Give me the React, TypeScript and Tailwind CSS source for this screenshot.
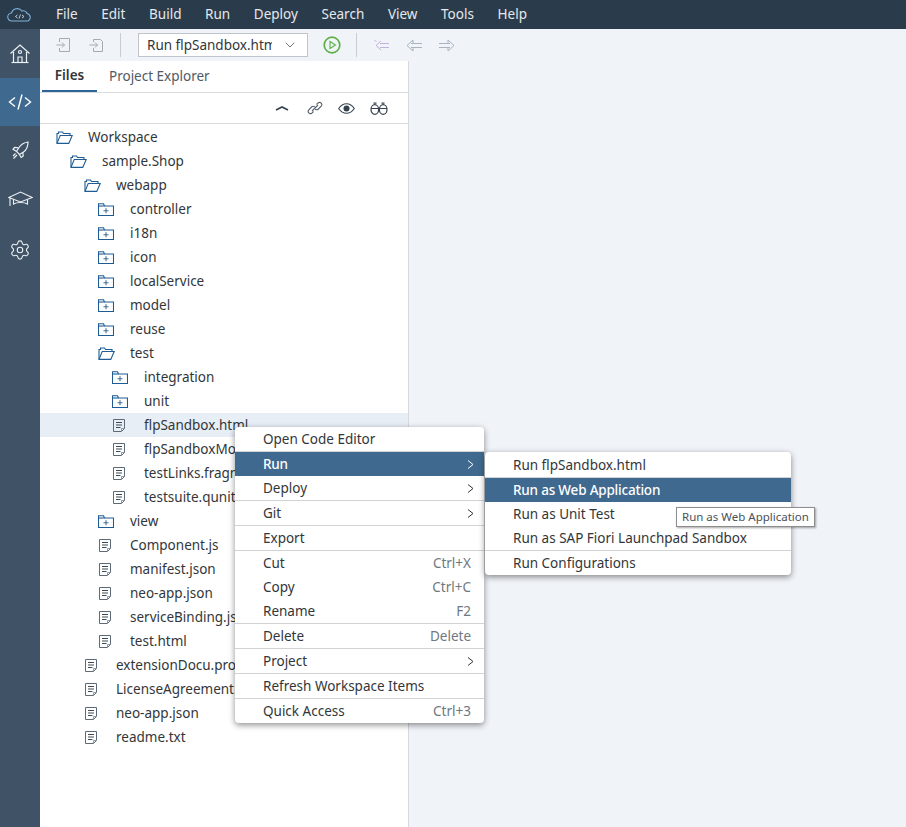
import { ChevronDown, Settings } from 'lucide-react';

const menus = ['File', 'Edit', 'Build', 'Run', 'Deploy', 'Search', 'View', 'Tools', 'Help'];

type Row = { name: string; level: number; kind: 'open' | 'closed' | 'file'; selected?: boolean };

const tree: Row[] = [
  { name: 'Workspace', level: 0, kind: 'open' },
  { name: 'sample.Shop', level: 1, kind: 'open' },
  { name: 'webapp', level: 2, kind: 'open' },
  { name: 'controller', level: 3, kind: 'closed' },
  { name: 'i18n', level: 3, kind: 'closed' },
  { name: 'icon', level: 3, kind: 'closed' },
  { name: 'localService', level: 3, kind: 'closed' },
  { name: 'model', level: 3, kind: 'closed' },
  { name: 'reuse', level: 3, kind: 'closed' },
  { name: 'test', level: 3, kind: 'open' },
  { name: 'integration', level: 4, kind: 'closed' },
  { name: 'unit', level: 4, kind: 'closed' },
  { name: 'flpSandbox.html', level: 4, kind: 'file', selected: true },
  { name: 'flpSandboxMockServer.html', level: 4, kind: 'file' },
  { name: 'testLinks.fragment.xml', level: 4, kind: 'file' },
  { name: 'testsuite.qunit.html', level: 4, kind: 'file' },
  { name: 'view', level: 3, kind: 'closed' },
  { name: 'Component.js', level: 3, kind: 'file' },
  { name: 'manifest.json', level: 3, kind: 'file' },
  { name: 'neo-app.json', level: 3, kind: 'file' },
  { name: 'serviceBinding.js', level: 3, kind: 'file' },
  { name: 'test.html', level: 3, kind: 'file' },
  { name: 'extensionDocu.properties', level: 2, kind: 'file' },
  { name: 'LicenseAgreement.pdf', level: 2, kind: 'file' },
  { name: 'neo-app.json', level: 2, kind: 'file' },
  { name: 'readme.txt', level: 2, kind: 'file' },
];

const levelPad = ['pl-[16px]', 'pl-[30px]', 'pl-[44px]', 'pl-[58px]', 'pl-[72px]'];

type Item = { label: string; hint?: string; arrow?: boolean; sep?: boolean; active?: boolean };

const contextItems: Item[] = [
  { label: 'Open Code Editor', sep: true },
  { label: 'Run', arrow: true, active: true },
  { label: 'Deploy', arrow: true, sep: true },
  { label: 'Git', arrow: true, sep: true },
  { label: 'Export', sep: true },
  { label: 'Cut', hint: 'Ctrl+X' },
  { label: 'Copy', hint: 'Ctrl+C' },
  { label: 'Rename', hint: 'F2', sep: true },
  { label: 'Delete', hint: 'Delete', sep: true },
  { label: 'Project', arrow: true, sep: true },
  { label: 'Refresh Workspace Items', sep: true },
  { label: 'Quick Access', hint: 'Ctrl+3' },
];

const runItems: Item[] = [
  { label: 'Run flpSandbox.html', sep: true },
  { label: 'Run as Web Application', active: true },
  { label: 'Run as Unit Test' },
  { label: 'Run as SAP Fiori Launchpad Sandbox', sep: true },
  { label: 'Run Configurations' },
];

function FolderOpen() {
  return (
    <svg width="17" height="13" viewBox="0 0 17 13" fill="none" stroke="#1f5c94" strokeWidth="1.100">
      <path d="M1 12V2.500h1.500V1h4l1 1.500H14v2" />
      <path d="M1 12.400h11.800l3.400-7.900H4.200L1 12.400z" />
    </svg>
  );
}

function FolderClosed() {
  return (
    <svg width="16" height="13" viewBox="0 0 16 13" fill="none" stroke="#1f5c94" strokeWidth="1.100">
      <path d="M.5 12.500V.8h5l1 2.200h9v9.500z" />
      <path d="M.5 3h6" />
      <path d="M5.500 7.800h5M8 5.300v5" stroke="#3f6f9f" />
    </svg>
  );
}

function FileIcon() {
  return (
    <svg width="12" height="13" viewBox="0 0 12 13" fill="none" stroke="#3c4a57" strokeWidth="1">
      <path d="M.5.5h11v9l-3 3h-8z" stroke="#5c6a78" />
      <path d="M8.500 12.500v-3h3" stroke="#8b97a3" />
      <path d="M3 3.500h6M3 6h6M3 8.500h4.500" />
    </svg>
  );
}

function MenuRow({ item, className }: { item: Item; className: string }) {
  return (
    <div
      className={`flex h-[24px] items-center pr-[13px] ${className} ${
        item.active ? 'bg-[#3f698f] font-medium tracking-[-0.2px] text-white' : 'text-[#32363a]'
      } ${item.sep ? 'box-content border-b border-[#d0d2d4]' : ''}`}
    >
      <span className="flex-1 whitespace-nowrap">{item.label}</span>
      {item.hint && <span className="text-[#6f7880]">{item.hint}</span>}
      {item.arrow && (
        <svg className="-mr-[3px]" width="7" height="9" viewBox="0 0 7 9" fill="none" stroke={item.active ? '#fff' : '#32363a'}>
          <path d="M1 .5l5 4-5 4" />
        </svg>
      )}
    </div>
  );
}

export default function App() {
  return (
    <div className="relative flex h-[827px] w-[906px] flex-col overflow-hidden bg-white font-['Noto_Sans',sans-serif] text-[13.500px] text-[#32363a]">
      <header className="flex h-[29px] shrink-0 items-center bg-[#2a3b4b]">
        <div className="flex w-[56px] justify-start pl-[7px]">
          <svg width="26" height="14" viewBox="0 0 26 14" fill="none" stroke="#7fb3da" strokeWidth="1.100">
            <path d="M7 13H5a4 4 0 0 1-.5-8A6 6 0 0 1 15 3a4 4 0 0 1 5 2.500A4 4 0 0 1 21 13z" />
            <path d="M10.500 7l-2 1.500 2 1.500M15 7l2 1.500-2 1.500M13.500 6.500l-1.500 4" stroke="#c6def0" strokeWidth=".9" />
          </svg>
        </div>
        <nav className="flex gap-[23.650px] text-[#e6e9ec]">
          {menus.map((m) => (
            <span key={m}>{m}</span>
          ))}
        </nav>
      </header>

      <div className="flex min-h-0 flex-1">
        <aside className="flex w-[40px] shrink-0 flex-col bg-[#3f5266] text-[#eef1f4]">
          <div className="flex h-[49px] items-center justify-center">
            <svg width="20" height="20" viewBox="0 0 20 20" fill="none" stroke="currentColor" strokeWidth="1.200">
              <path d="M.5 9.500L10 1l9.500 8.500" />
              <path d="M3.500 8v10.500h13V8" />
              <path d="M1.500 18.500h17" />
              <path d="M8 18.500V13h4v5.500" />
              <circle cx="10" cy="8" r="1.500" />
            </svg>
          </div>
          <div className="flex h-[48px] items-center justify-center bg-[#3f698f] text-white">
            <svg width="24" height="16" viewBox="0 0 24 16" fill="none" stroke="currentColor" strokeWidth="1.400">
              <path d="M7 3.500L1.500 8 7 12.500M17 3.500L22.500 8 17 12.500M14 .5L10 15.500" />
            </svg>
          </div>
          <div className="flex h-[47px] items-center justify-center">
            <svg width="17" height="18" viewBox="0 0 17 18" fill="none" stroke="currentColor" strokeWidth="1.200">
              <path d="M16 1c-4 .5-7 2.500-9 5.500l-2.500 4 3 3 4-2.500c3-2 4.500-5.500 4.500-10z" />
              <path d="M6.500 6.800l-4-.5-1.500 2 3.300 2M10.800 11l.4 4-2 1.500-2-3.200" />
              <path d="M3.500 12.500L1 15M5 14l-3.500 3.500" />
            </svg>
          </div>
          <div className="flex h-[51px] items-center justify-center">
            <svg width="25" height="16" viewBox="0 0 25 16" fill="none" stroke="currentColor" strokeWidth="1.100">
              <path d="M.8 6.500L12.500 1l11.700 5.500-11.700 4.500z" />
              <path d="M5.500 8.500V13c3-2 11-2 14 0V8.500" />
              <path d="M2 7v8" />
            </svg>
          </div>
          <div className="flex h-[52px] items-center justify-center">
            <Settings size={22} strokeWidth={1.200} />
          </div>
        </aside>

        <div className="flex min-w-0 flex-1 flex-col bg-[#f0f3f8]">
          <div className="flex h-[32px] shrink-0 items-center pl-[16px]">
            <svg width="16" height="16" viewBox="0 0 16 16" fill="none" stroke="#a4abb2">
              <path d="M3.500 5V1.500h10v13h-10V11M.5 8h8M6 5.500L8.500 8 6 10.500" />
            </svg>
            <svg className="ml-[16px]" width="16" height="16" viewBox="0 0 16 16" fill="none" stroke="#a4abb2">
              <path d="M5.500 5V2.500h7l2 2v10h-9V11M1.500 8h8M7 5.500L9.500 8 7 10.500" />
            </svg>
            <div className="ml-[16px] h-[24px] w-px bg-[#c6ccd2]" />
            <div className="ml-[17px] flex h-[24px] w-[170px] items-center border border-[#bfc5cb] bg-white pl-[8px]">
              <span className="w-[125px] overflow-hidden whitespace-nowrap">Run flpSandbox.html</span>
              <ChevronDown className="ml-[10px] text-[#4a5561]" size={16} strokeWidth={1.200} />
            </div>
            <svg className="ml-[15px]" width="18" height="18" viewBox="0 0 18 18" fill="none" stroke="#5bb146" strokeWidth="1.700">
              <circle cx="9" cy="9" r="7.800" />
              <path d="M7 5.500L12.500 9 7 12.500z" strokeWidth="1.100" />
            </svg>
            <div className="ml-[15px] h-[24px] w-px bg-[#c6ccd2]" />
            <svg className="ml-[16px]" width="17" height="13" viewBox="0 0 17 13" fill="none" stroke="#c3b2dc">
              <path d="M1.500 1.500l2 1M8 2L3 6.500 8 11M3 6.500h0M7 4.500h9M7 8.500h9" />
            </svg>
            <svg className="ml-[16px]" width="17" height="13" viewBox="0 0 17 13" fill="none" stroke="#a9b4bf">
              <path d="M7 1L1 6.500 7 12M7 1v3M7 12V9M5 4.500h11M5 8.500h11" />
            </svg>
            <svg className="ml-[15px]" width="17" height="13" viewBox="0 0 17 13" fill="none" stroke="#a9b4bf">
              <path d="M10 1l6 5.500-6 5.500M10 1v3M10 12V9M1 4.500h11M1 8.500h11" />
            </svg>
          </div>

          <section className="flex w-[369px] min-h-0 flex-1 flex-col border-r border-[#d5d8dc] bg-white">
            <div className="flex h-[32px] shrink-0 items-end border-b border-[#d9dcdf] pl-[2px]">
              <span className="flex h-[32px] w-[55px] items-center justify-center border-b-2 border-[#2f6497] font-semibold">
                Files
              </span>
              <span className="flex h-[32px] items-center pl-[12px] text-[#4f5a64]">Project Explorer</span>
            </div>
            <div className="flex h-[31px] shrink-0 items-center justify-end gap-[15px] border-b border-[#d9dcdf] pr-[20px] text-[#34424f]">
              <svg className="mr-[3px]" width="14" height="6" viewBox="0 0 14 6" fill="none" stroke="currentColor" strokeWidth="1.600">
                <path d="M1 5L7 2l6 3" />
              </svg>
              <svg width="16" height="16" viewBox="0 0 16 16" fill="none" stroke="#55616d" strokeWidth="1.100">
                <path d="M6.500 11.500l-1.700 1.700a2.300 2.300 0 0 1-3.200-3.200l3-3a2.300 2.300 0 0 1 3.200 0" />
                <path d="M9.500 4.500l1.700-1.700a2.300 2.300 0 0 1 3.200 3.200l-3 3a2.300 2.300 0 0 1-3.200 0" />
                <path d="M5 11l6-6" />
              </svg>
              <svg width="17" height="11" viewBox="0 0 17 11" fill="none" stroke="currentColor" strokeWidth="1.100">
                <path d="M.7 5.500C3 2 5.500.7 8.500.7s5.500 1.300 7.800 4.800c-2.300 3.500-4.800 4.800-7.800 4.800S3 9 .7 5.500z" />
                <circle cx="8.500" cy="5.500" r="3" fill="currentColor" stroke="none" />
              </svg>
              <svg width="18" height="13" viewBox="0 0 18 13" fill="none" stroke="currentColor" strokeWidth="1.200">
                <ellipse cx="4.800" cy="7.500" rx="3.800" ry="4.800" />
                <ellipse cx="13.200" cy="7.500" rx="3.800" ry="4.800" />
                <path d="M1 6.500h16M3.500 1.200h3M11.500 1.200h3M8.600 6.500h.8" />
              </svg>
            </div>
            <ul className="flex-1 overflow-hidden pt-px">
              {tree.map((row, i) => (
                <li
                  key={i}
                  className={`flex h-[24px] items-center ${levelPad[row.level]} ${row.selected ? 'bg-[#e7eef6]' : ''}`}
                >
                  <span className={`flex w-[32px] shrink-0 ${row.kind === 'file' ? 'pl-[1px]' : ''}`}>
                    {row.kind === 'open' && <FolderOpen />}
                    {row.kind === 'closed' && <FolderClosed />}
                    {row.kind === 'file' && <FileIcon />}
                  </span>
                  <span className="whitespace-nowrap">{row.name}</span>
                </li>
              ))}
            </ul>
          </section>
        </div>
      </div>

      <div className="absolute left-[235px] top-[427px] w-[249px] rounded-[4px] bg-white shadow-[0_2px_6px_rgba(0,0,0,0.45)]">
        {contextItems.map((item) => (
          <MenuRow key={item.label} item={item} className="pl-[28px]" />
        ))}
      </div>

      <div className="absolute left-[485px] top-[452px] w-[306px] rounded-[4px] bg-white pt-px shadow-[0_2px_6px_rgba(0,0,0,0.45)]">
        {runItems.map((item) => (
          <MenuRow key={item.label} item={item} className="pl-[28px]" />
        ))}
      </div>

      <div className="absolute left-[676px] top-[507px] flex h-[20px] items-center border border-[#8d8d8d] bg-white px-[5px] text-[11.500px] text-[#4a5158] shadow-[1px_1px_2px_rgba(0,0,0,0.35)]">
        Run as Web Application
      </div>
    </div>
  );
}
